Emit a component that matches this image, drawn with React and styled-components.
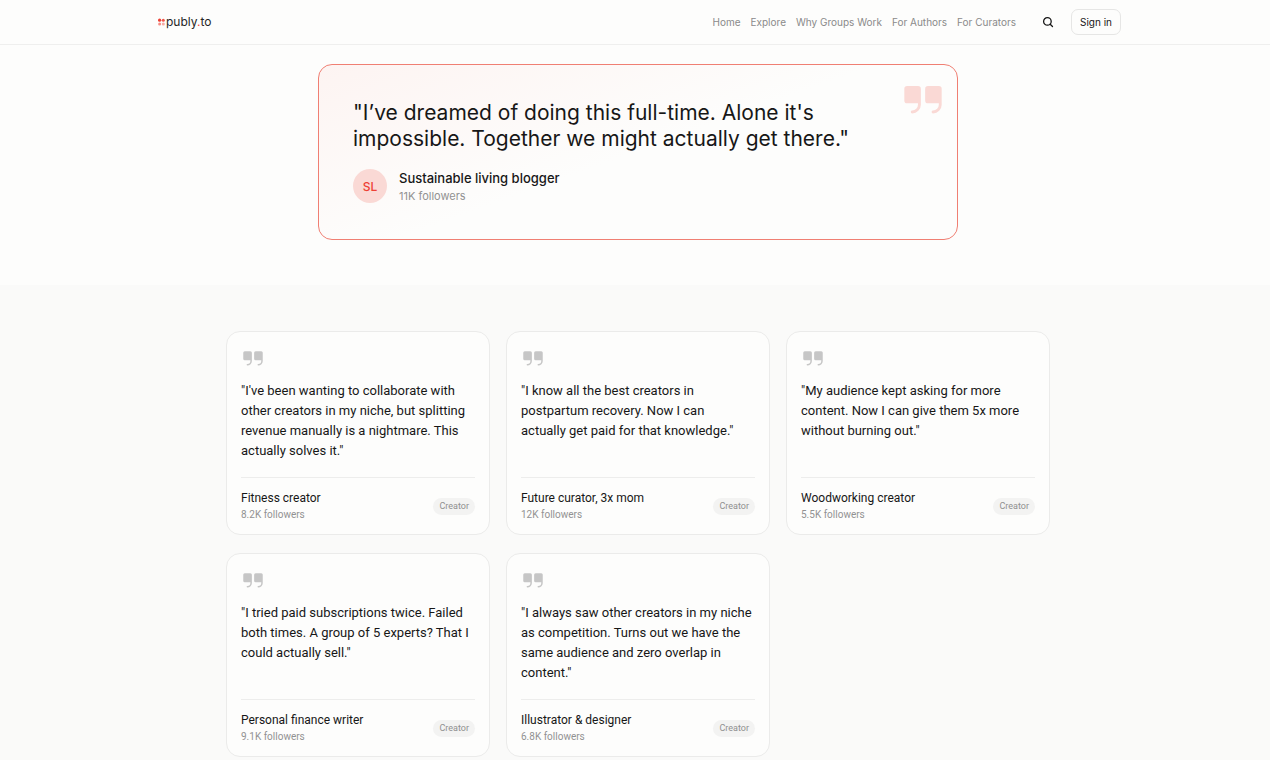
import React from "react";
import styled, { createGlobalStyle } from "styled-components";

const displayFont = "Inter, Roboto, sans-serif";

const GlobalStyle = createGlobalStyle`
  * { box-sizing: border-box; }
  body {
    margin: 0;
    background: #fdfdfc;
    color: #171717;
    font-family: Roboto, Inter, sans-serif;
  }
  p, blockquote, figure { margin: 0; }
`;

const Header = styled.header`
  position: sticky;
  top: 0;
  z-index: 1;
  height: 45px;
  padding-left: 6px;
  background: #fdfdfc;
  border-bottom: 1px solid #efefee;
  font-family: ${displayFont};
`;

const HeaderInner = styled.div`
  display: flex;
  align-items: center;
  max-width: 966px;
  height: 100%;
  margin: 0 auto;
  padding-left: 3px;
`;

const Logo = styled.a`
  display: flex;
  align-items: center;
  gap: 1px;
  margin-right: auto;
  color: #262626;
  font-size: 12px;
  line-height: 16px;
  text-decoration: none;
`;

const LogoDot = styled.span`
  color: #f0483a;
`;

const Nav = styled.nav`
  display: flex;
  gap: 10px;
  margin-right: 26px;
`;

const NavLink = styled.a`
  color: #8a8a8a;
  font-size: 10px;
  line-height: 16px;
  text-decoration: none;
  white-space: nowrap;
`;

const SearchButton = styled.button`
  display: flex;
  margin-right: 17px;
  padding: 0;
  border: 0;
  background: none;
  color: #171717;
`;

const SignInButton = styled.button`
  width: 50px;
  height: 26px;
  padding: 0;
  border: 1px solid #e6e6e5;
  border-radius: 7px;
  background: #fdfdfc;
  color: #171717;
  font: 400 10px/16px ${displayFont};
  white-space: nowrap;
`;

const FeaturedSection = styled.section`
  padding: 19px 0 45px 6px;
`;

const FeaturedCard = styled.figure`
  position: relative;
  max-width: 640px;
  margin: 0 auto;
  padding: 35px 34px 34px;
  border: 1px solid #f07f73;
  border-radius: 14px;
  background: linear-gradient(160deg, #fdf4f2 0%, #fdfdfc 50%);
`;

const FeaturedMark = styled.div`
  position: absolute;
  top: 11px;
  right: 11px;
  display: flex;
  color: #fad9d5;
`;

const FeaturedQuote = styled.blockquote`
  font-family: ${displayFont};
  font-size: 21px;
  line-height: 26px;
  white-space: pre-line;
`;

const Person = styled.figcaption`
  display: flex;
  gap: 12px;
  margin-top: 17px;
`;

const Avatar = styled.span`
  display: flex;
  align-items: center;
  justify-content: center;
  width: 34px;
  height: 34px;
  border-radius: 50%;
  background: #fad9d5;
  color: #ee4034;
  font-family: ${displayFont};
  font-size: 12px;
  font-weight: 500;
`;

const PersonName = styled.p`
  font-family: ${displayFont};
  font-size: 13px;
  font-weight: 500;
  line-height: 18px;
`;

const PersonMeta = styled.p`
  color: #929292;
  font-family: ${displayFont};
  font-size: 11px;
  line-height: 18px;
`;

const GridSection = styled.section`
  padding: 46px 0 46px 6px;
  background: #fafaf9;
`;

const Grid = styled.div`
  display: grid;
  grid-template-columns: repeat(3, 1fr);
  gap: 18px 16px;
  max-width: 824px;
  margin: 0 auto;
`;

const Card = styled.figure`
  display: flex;
  flex-direction: column;
  padding: 14px 14px 12px;
  border: 1px solid #ebebea;
  border-radius: 14px;
  background: #fdfdfc;
`;

const CardMark = styled.div`
  display: flex;
  margin-bottom: 11px;
  color: #c6c6c6;
`;

const CardQuote = styled.blockquote`
  flex: 1;
  min-height: 80px;
  font-size: 13px;
  line-height: 20px;
  white-space: pre-line;
`;

const CardFooter = styled.figcaption`
  display: flex;
  align-items: center;
  justify-content: space-between;
  margin-top: 16px;
  padding-top: 12px;
  border-top: 1px solid #ededec;
`;

const CardName = styled.p`
  font-size: 12px;
  line-height: 17px;
`;

const CardMeta = styled.p`
  color: #929292;
  font-size: 10px;
  line-height: 15px;
`;

const Tag = styled.span`
  padding: 0 6px;
  border-radius: 9px;
  background: #f3f3f2;
  color: #8f8f8f;
  font-size: 9px;
  line-height: 17px;
`;

const navItems = ["Home", "Explore", "Why Groups Work", "For Authors", "For Curators"];

const testimonials = [
  {
    quote: "\"I've been wanting to collaborate with\nother creators in my niche, but splitting\nrevenue manually is a nightmare. This\nactually solves it.\"",
    name: "Fitness creator",
    followers: "8.2K followers",
  },
  {
    quote: "\"I know all the best creators in\npostpartum recovery. Now I can\nactually get paid for that knowledge.\"",
    name: "Future curator, 3x mom",
    followers: "12K followers",
  },
  {
    quote: "\"My audience kept asking for more\ncontent. Now I can give them 5x more\nwithout burning out.\"",
    name: "Woodworking creator",
    followers: "5.5K followers",
  },
  {
    quote: "\"I tried paid subscriptions twice. Failed\nboth times. A group of 5 experts? That I\ncould actually sell.\"",
    name: "Personal finance writer",
    followers: "9.1K followers",
  },
  {
    quote: "\"I always saw other creators in my niche\nas competition. Turns out we have the\nsame audience and zero overlap in\ncontent.\"",
    name: "Illustrator & designer",
    followers: "6.8K followers",
  },
];

function QuoteIcon({ size }) {
  return (
    <svg width={size} height={size} viewBox="0 0 256 256" fill="currentColor" aria-hidden="true">
      <path d="M116,72v88a48.05,48.05,0,0,1-48,48,8,8,0,0,1,0-16,32,32,0,0,0,32-32v-8H40a16,16,0,0,1-16-16V72A16,16,0,0,1,40,56h60A16,16,0,0,1,116,72ZM216,56H156a16,16,0,0,0-16,16v64a16,16,0,0,0,16,16h60v8a32,32,0,0,1-32,32,8,8,0,0,0,0,16,48.05,48.05,0,0,0,48-48V72A16,16,0,0,0,216,56Z" />
    </svg>
  );
}

function LogoMark() {
  return (
    <svg width="7" height="8" viewBox="0 0 7 8" aria-hidden="true">
      <circle cx="1.6" cy="2.2" r="1.6" fill="#ee4034" />
      <circle cx="5.3" cy="2.2" r="1.5" fill="#f0554a" />
      <circle cx="1.6" cy="5.9" r="1.5" fill="#f58d84" />
      <circle cx="5.3" cy="5.9" r="1.5" fill="#f8aaa3" />
    </svg>
  );
}

function SearchIcon() {
  return (
    <svg width="12" height="12" viewBox="0 0 12 12" fill="none" stroke="currentColor" strokeWidth="1.3" strokeLinecap="round" aria-hidden="true">
      <circle cx="5.4" cy="5.4" r="3.8" />
      <path d="M8.2 8.2 10.5 10.5" />
    </svg>
  );
}

export default function App() {
  return (
    <>
      <GlobalStyle />
      <Header>
        <HeaderInner>
          <Logo href="#">
            <LogoMark />
            <span>publy<LogoDot>.</LogoDot>to</span>
          </Logo>
          <Nav>
            {navItems.map((item) => (
              <NavLink key={item} href="#">{item}</NavLink>
            ))}
          </Nav>
          <SearchButton type="button" aria-label="Search">
            <SearchIcon />
          </SearchButton>
          <SignInButton type="button">Sign in</SignInButton>
        </HeaderInner>
      </Header>
      <main>
        <FeaturedSection>
          <FeaturedCard>
            <FeaturedMark><QuoteIcon size={46} /></FeaturedMark>
            <FeaturedQuote>
              {"\"I’ve dreamed of doing this full-time. Alone it's\nimpossible. Together we might actually get there.\""}
            </FeaturedQuote>
            <Person>
              <Avatar>SL</Avatar>
              <div>
                <PersonName>Sustainable living blogger</PersonName>
                <PersonMeta>11K followers</PersonMeta>
              </div>
            </Person>
          </FeaturedCard>
        </FeaturedSection>
        <GridSection>
          <Grid>
            {testimonials.map((item) => (
              <Card key={item.name}>
                <CardMark><QuoteIcon size={24} /></CardMark>
                <CardQuote>{item.quote}</CardQuote>
                <CardFooter>
                  <div>
                    <CardName>{item.name}</CardName>
                    <CardMeta>{item.followers}</CardMeta>
                  </div>
                  <Tag>Creator</Tag>
                </CardFooter>
              </Card>
            ))}
          </Grid>
        </GridSection>
      </main>
    </>
  );
}
